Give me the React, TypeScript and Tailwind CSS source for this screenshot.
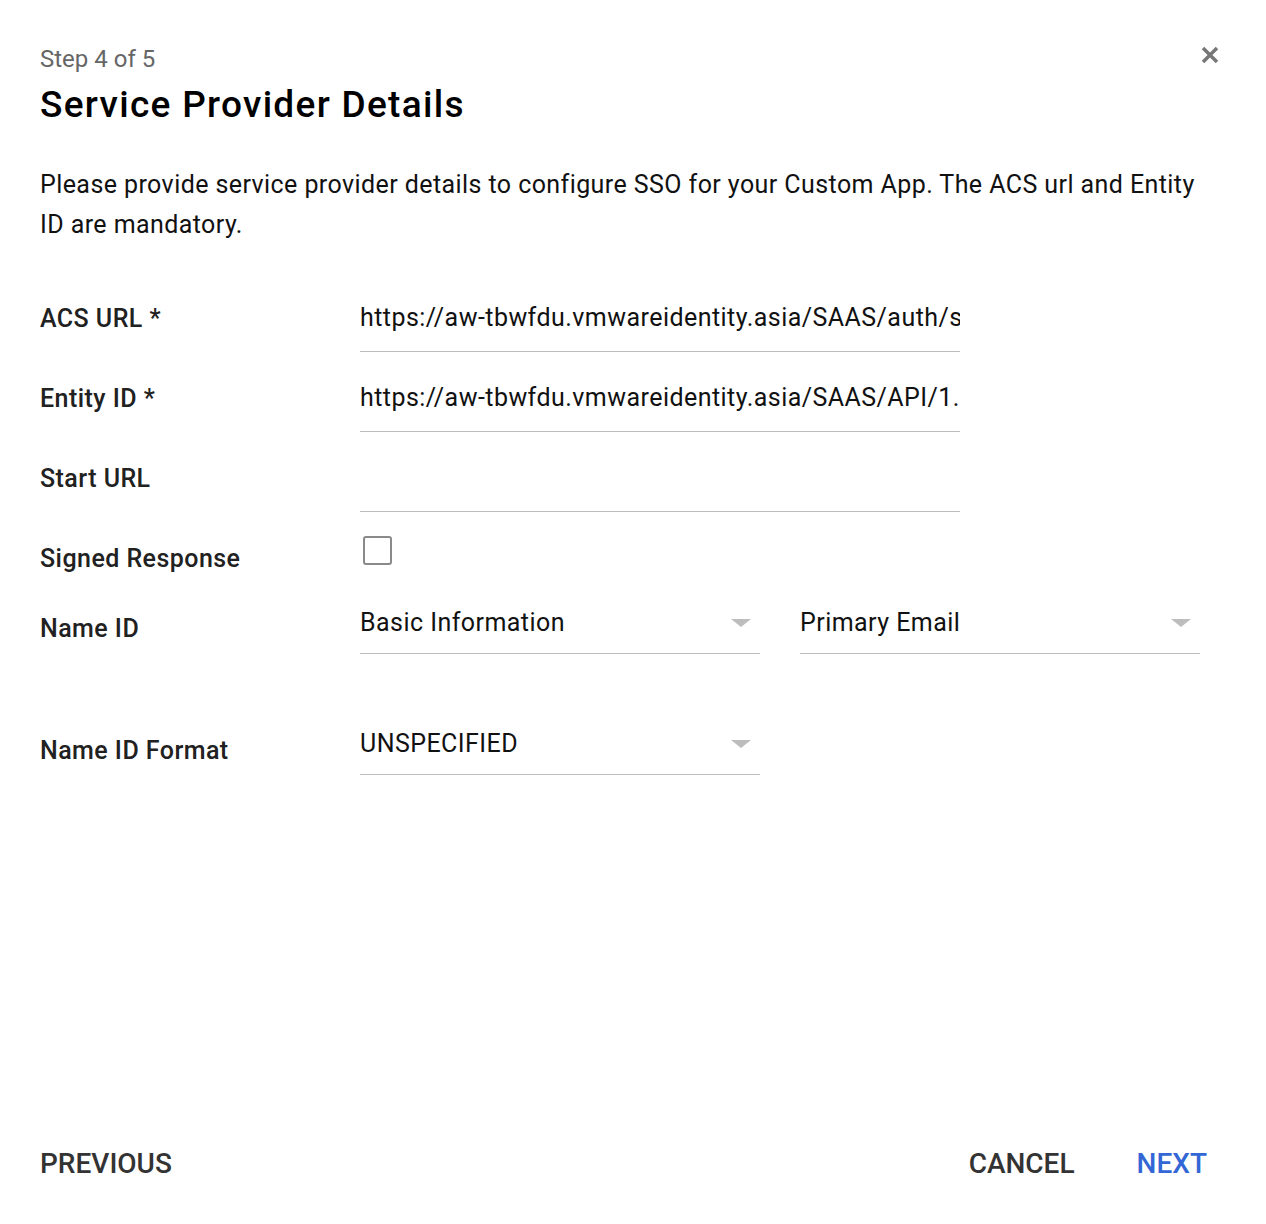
import React from "react";

const Arrow = () => (
  <svg width="20" height="8" viewBox="0 0 20 8" className="shrink-0">
    <polygon points="0,0 20,0 10,8" fill="#bdbdbd" />
  </svg>
);

function TextRow({ label, value }: { label: string; value: string }) {
  return (
    <div className="flex h-[80px]">
      <div className="w-[320px] pt-[9px] text-[25px] leading-[28px] font-medium tracking-[0.45px] text-[#212121]">{label}</div>
      <div className="w-[600px] h-[56px] border-b border-[#bdbdbd] pt-[8px]">
        <div className="overflow-hidden whitespace-nowrap text-[25px] leading-[28px] tracking-[0.45px] text-[#111]">{value}</div>
      </div>
    </div>
  );
}

function Select({ value }: { value: string }) {
  return (
    <div className="w-[400px] h-[54px] border-b border-[#bdbdbd] pt-[9px] flex items-start justify-between pr-[9px]">
      <div className="text-[25px] leading-[28px] tracking-[0.45px] text-[#111]">{value}</div>
      <div className="pt-[10px]">
        <Arrow />
      </div>
    </div>
  );
}

export default function App() {
  return (
    <div
      className="min-h-[1224px] w-[1266px] bg-white flex flex-col px-10"
      style={{ fontFamily: "Roboto, 'Liberation Sans', sans-serif" }}
    >
      <div className="relative pt-[45px]">
        <div className="text-[24px] leading-[28px] text-[#666]">Step 4 of 5</div>
        <div className="mt-[10px] text-[37px] leading-[44px] font-medium tracking-[1.3px] text-black">Service Provider Details</div>
        <svg
          className="absolute right-[6px] top-[45px]"
          width="20"
          height="20"
          viewBox="0 0 20 20"
        >
          <path d="M3 3 L17 17 M17 3 L3 17" stroke="#777" strokeWidth="3.5" strokeLinecap="butt" />
        </svg>
      </div>

      <p className="mt-[38px] text-[25px] leading-[40px] tracking-[0.42px] text-[#111] pr-[10px]">
        Please provide service provider details to configure SSO for your Custom App. The ACS url and Entity ID are mandatory.
      </p>

      <div className="mt-[51px]">
        <TextRow label="ACS URL *" value="https://aw-tbwfdu.vmwareidentity.asia/SAAS/auth/saml/response" />
        <TextRow label="Entity ID *" value="https://aw-tbwfdu.vmwareidentity.asia/SAAS/API/1.0/GET/metadata/idp.xml" />
        <TextRow label="Start URL" value="" />
      </div>

      <div className="flex h-[65px] -mt-[1px]">
        <div className="w-[320px] pt-[10px] text-[25px] leading-[28px] font-medium tracking-[0.45px] text-[#212121]">Signed Response</div>
        <div className="pl-[3px] pt-[1px]">
          <div className="w-[29px] h-[29px] border-2 border-[#8a8a8a] rounded-[3px]" />
        </div>
      </div>

      <div className="flex">
        <div className="w-[320px] pt-[15px] text-[25px] leading-[28px] font-medium tracking-[0.45px] text-[#212121]">Name ID</div>
        <Select value="Basic Information" />
        <div className="w-[40px]" />
        <Select value="Primary Email" />
      </div>

      <div className="flex mt-[67px]">
        <div className="w-[320px] pt-[16px] text-[25px] leading-[28px] font-medium tracking-[0.45px] text-[#212121]">Name ID Format</div>
        <Select value="UNSPECIFIED" />
      </div>

      <div className="mt-auto flex items-center pb-[44px]">
        <button className="text-[28px] leading-[32px] font-medium text-[#333]">PREVIOUS</button>
        <div className="flex-1" />
        <button className="text-[28px] leading-[32px] font-medium text-[#333]">CANCEL</button>
        <button className="ml-[62px] mr-[19px] text-[28px] leading-[32px] font-medium text-[#3367d6]">NEXT</button>
      </div>
    </div>
  );
}
